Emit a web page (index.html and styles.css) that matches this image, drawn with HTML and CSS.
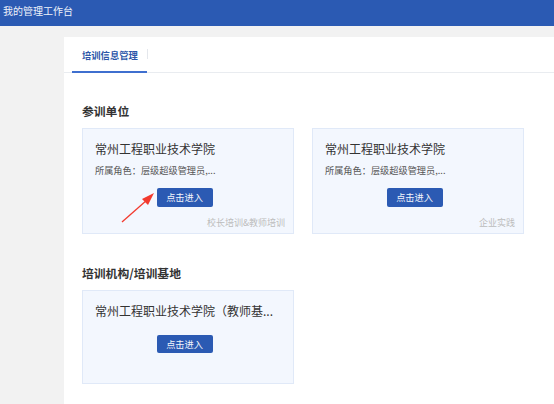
FILE: index.html
```html
<!DOCTYPE html>
<html lang="zh-CN">
<head>
<meta charset="utf-8">
<title>我的管理工作台</title>
<link rel="stylesheet" href="styles.css">
</head>
<body>
<header class="topbar">我的管理工作台</header>
<main class="main">
  <section class="panel">
    <nav class="tabs">
      <div class="tab active">培训信息管理</div>
      <div class="tab-sep"></div>
    </nav>
    <div class="panel-body">
      <h2 class="section-title first">参训单位</h2>
      <div class="cards">
        <div class="card">
          <div class="card-title">常州工程职业技术学院</div>
          <div class="card-sub">所属角色：层级超级管理员,...</div>
          <div class="card-action"><button class="btn">点击进入</button></div>
          <div class="card-tag">校长培训&amp;教师培训</div>
          <svg class="arrow" width="44" height="40" viewBox="0 0 44 40">
            <line x1="3" y1="36" x2="28" y2="14" stroke="#f23a2e" stroke-width="1.3"/>
            <polygon points="35,7 23,13 29,19" fill="#f23a2e"/>
          </svg>
        </div>
        <div class="card">
          <div class="card-title">常州工程职业技术学院</div>
          <div class="card-sub">所属角色：层级超级管理员,...</div>
          <div class="card-action"><button class="btn">点击进入</button></div>
          <div class="card-tag">企业实践</div>
        </div>
      </div>
      <h2 class="section-title second">培训机构/培训基地</h2>
      <div class="cards">
        <div class="card short">
          <div class="card-title">常州工程职业技术学院（教师基...</div>
          <div class="card-action"><button class="btn">点击进入</button></div>
        </div>
      </div>
    </div>
  </section>
</main>
</body>
</html>
```
FILE: styles.css
```css
* { box-sizing: border-box; }
html, body {
  margin: 0;
  padding: 0;
  height: 100%;
}
body {
  font-family: "Noto Sans CJK SC", "Noto Sans", sans-serif;
  background: #f2f2f2;
  color: #333;
  overflow: hidden;
}
.topbar {
  height: 26px;
  line-height: 22px;
  background: #2b5ab3;
  color: #eef2fa;
  font-size: 10px;
  padding-left: 3px;
}
.main {
  padding: 11px 0 0 64px;
  height: calc(100% - 26px);
}
.panel {
  background: #fff;
  height: 100%;
}
.tabs {
  display: flex;
  align-items: center;
  height: 36px;
  border-bottom: 1px solid #e9ecf0;
  padding-left: 8px;
}
.tab {
  height: 36px;
  line-height: 36px;
  padding: 0 9px 0 10px;
  font-size: 9.3px;
  font-weight: bold;
  color: #2b56a8;
  border-bottom: 2px solid #3f6fcf;
}
.tab-sep {
  width: 1px;
  height: 10px;
  background: #e4e7ec;
  margin-top: -2px;
}
.panel-body {
  padding: 0 18px;
}
.section-title {
  margin: 0;
  font-size: 11.8px;
  line-height: 16px;
  font-weight: bold;
  color: #333;
}
.section-title.first { margin-top: 30px; margin-bottom: 9px; }
.section-title.second { margin-top: 31px; margin-bottom: 9px; }
.cards {
  display: grid;
  grid-template-columns: repeat(2, 212px);
  column-gap: 18px;
}
.card {
  position: relative;
  height: 106px;
  background: #f3f7fe;
  border: 1px solid #e0e9f8;
  padding: 12px 19px 0 12px;
}
.card.short {
  height: 94px;
}
.card-title {
  font-size: 12px;
  line-height: 16px;
  color: #333;
  white-space: nowrap;
}
.card-sub {
  margin-top: 7px;
  font-size: 9.2px;
  line-height: 13px;
  color: #555;
  white-space: nowrap;
}
.card-action {
  margin-top: 11px;
  display: flex;
  justify-content: center;
}
.card.short .card-action {
  margin-top: 16px;
}
.btn {
  width: 56px;
  height: 19px;
  padding: 0;
  border: none;
  border-radius: 2px;
  background: #2b5ab3;
  color: #f2f5fb;
  font-family: inherit;
  font-size: 9.2px;
  line-height: 19px;
}
.card.short .btn { height: 18px; line-height: 18px; }
.card-tag {
  margin-top: 9px;
  margin-right: -11px;
  text-align: right;
  font-size: 9px;
  line-height: 13px;
  color: #bcbcbc;
}
.arrow {
  position: absolute;
  left: 36px;
  top: 57px;
}
```
